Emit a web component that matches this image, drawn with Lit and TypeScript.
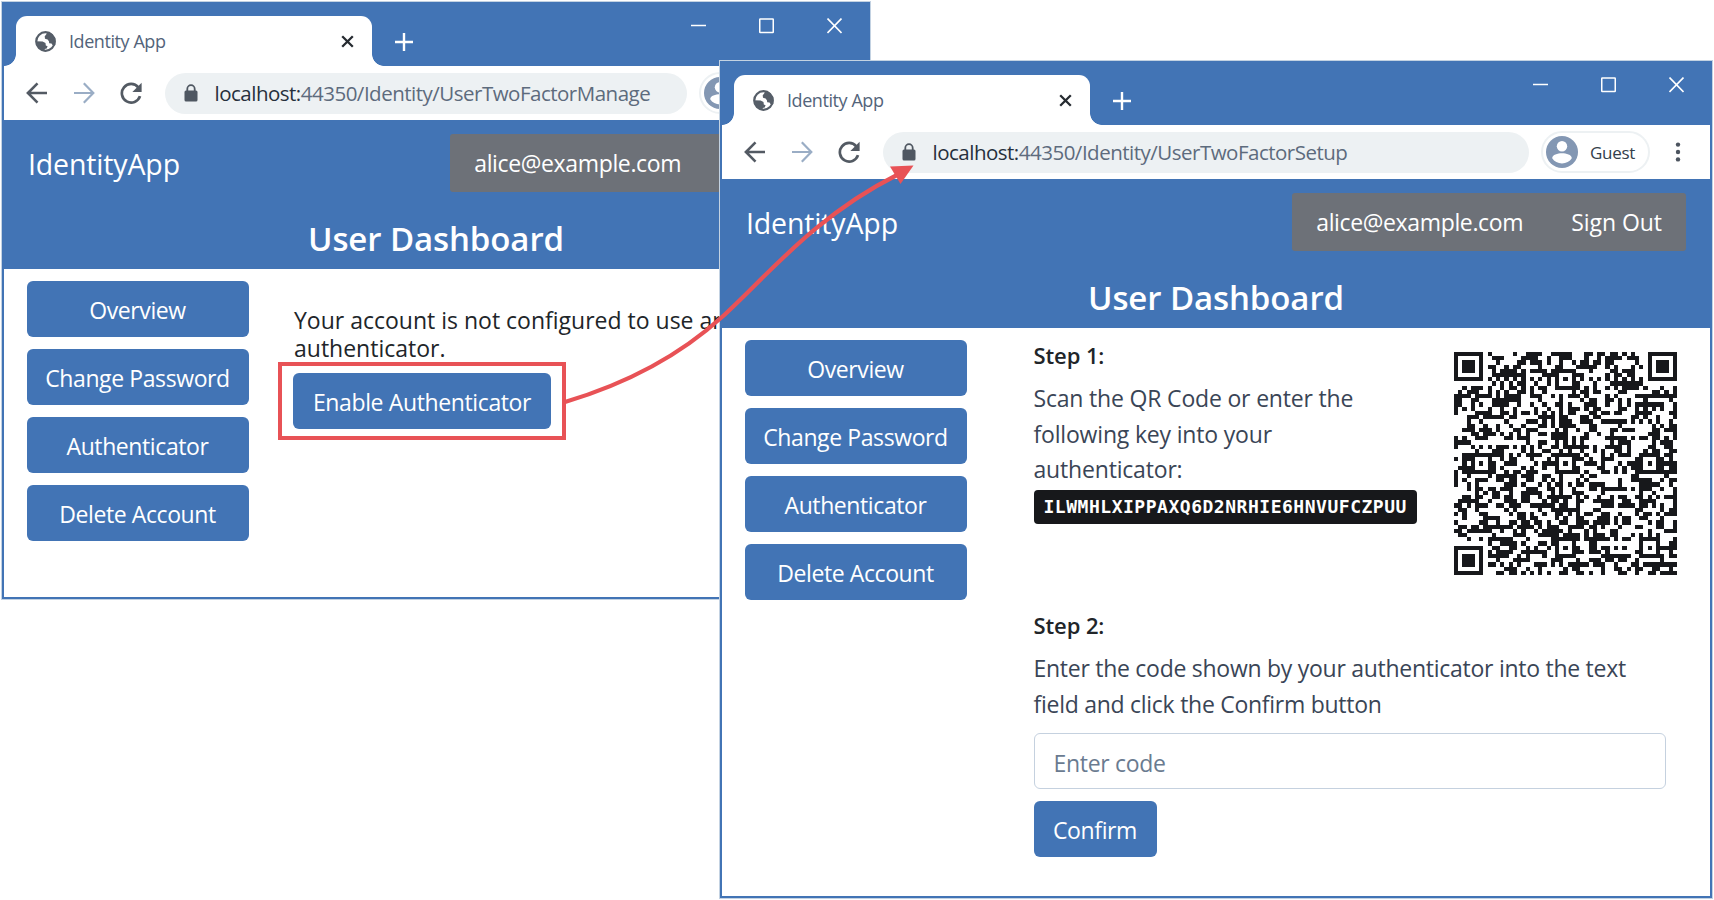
import { LitElement, html, css } from "lit";
import { customElement, property } from "lit/decorators.js";

/* ---------- QR code, version 9, error correction level H ---------- */
const SIZE = 53;
const CODEWORDS = 292;
const ECC_LEN = 24;
const BLOCKS = 8;
const FORMAT_H = 2;

function gfMul(x: number, y: number): number {
  let z = 0;
  for (let i = 7; i >= 0; i--) {
    z = (z << 1) ^ ((z >>> 7) * 0x11d);
    z ^= ((y >>> i) & 1) * x;
  }
  return z;
}

function divisor(degree: number): number[] {
  const r: number[] = new Array(degree).fill(0);
  r[degree - 1] = 1;
  let root = 1;
  for (let i = 0; i < degree; i++) {
    for (let j = 0; j < degree; j++) {
      r[j] = gfMul(r[j], root);
      if (j + 1 < degree) r[j] ^= r[j + 1];
    }
    root = gfMul(root, 2);
  }
  return r;
}

function remainder(data: number[], div: number[]): number[] {
  const r = div.map(() => 0);
  for (const b of data) {
    const f = b ^ (r.shift() as number);
    r.push(0);
    div.forEach((c, i) => (r[i] ^= gfMul(c, f)));
  }
  return r;
}

function encode(text: string): number[] {
  const cap = CODEWORDS - ECC_LEN * BLOCKS;
  const bits: number[] = [];
  const put = (v: number, n: number) => {
    for (let i = n - 1; i >= 0; i--) bits.push((v >>> i) & 1);
  };
  put(4, 4);
  put(text.length, 8);
  for (const c of text) put(c.charCodeAt(0), 8);
  put(0, Math.min(4, cap * 8 - bits.length));
  while (bits.length % 8) bits.push(0);
  const data: number[] = [];
  for (let i = 0; i < bits.length; i += 8) data.push(parseInt(bits.slice(i, i + 8).join(""), 2));
  for (let p = 0xec; data.length < cap; p ^= 0xec ^ 0x11) data.push(p);

  const shortCount = BLOCKS - (CODEWORDS % BLOCKS);
  const shortLen = Math.floor(CODEWORDS / BLOCKS);
  const div = divisor(ECC_LEN);
  const blocks: number[][] = [];
  for (let i = 0, k = 0; i < BLOCKS; i++) {
    const part = data.slice(k, k + shortLen - ECC_LEN + (i < shortCount ? 0 : 1));
    k += part.length;
    const ecc = remainder(part, div);
    if (i < shortCount) part.push(0);
    blocks.push(part.concat(ecc));
  }
  const out: number[] = [];
  for (let i = 0; i < blocks[0].length; i++)
    blocks.forEach((b, j) => {
      if (i !== shortLen - ECC_LEN || j >= shortCount) out.push(b[i]);
    });
  return out;
}

function qrPath(text: string): string {
  const words = encode(text);
  const grid = Array.from({ length: SIZE }, () => new Array<number>(SIZE).fill(0));
  const fixed = Array.from({ length: SIZE }, () => new Array<boolean>(SIZE).fill(false));
  const set = (x: number, y: number, v: unknown) => {
    if (x < 0 || y < 0 || x >= SIZE || y >= SIZE) return;
    grid[y][x] = v ? 1 : 0;
    fixed[y][x] = true;
  };
  for (let i = 0; i < SIZE; i++) {
    set(6, i, i % 2 === 0);
    set(i, 6, i % 2 === 0);
  }
  for (const [a, b] of [[3, 3], [SIZE - 4, 3], [3, SIZE - 4]])
    for (let y = -4; y <= 4; y++)
      for (let x = -4; x <= 4; x++) {
        const d = Math.max(Math.abs(x), Math.abs(y));
        set(a + x, b + y, d !== 2 && d !== 4);
      }
  const align = [6, 26, 46];
  align.forEach((a, i) =>
    align.forEach((b, j) => {
      if ((i === 0 && j === 0) || (i === 0 && j === 2) || (i === 2 && j === 0)) return;
      for (let y = -2; y <= 2; y++)
        for (let x = -2; x <= 2; x++) set(a + x, b + y, Math.max(Math.abs(x), Math.abs(y)) !== 1);
    })
  );
  const fmt = FORMAT_H << 3;
  let r = fmt;
  for (let i = 0; i < 10; i++) r = (r << 1) ^ ((r >>> 9) * 0x537);
  const fb = ((fmt << 10) | r) ^ 0x5412;
  const bit = (i: number) => (fb >>> i) & 1;
  for (let i = 0; i <= 5; i++) set(8, i, bit(i));
  set(8, 7, bit(6));
  set(8, 8, bit(7));
  set(7, 8, bit(8));
  for (let i = 9; i < 15; i++) set(14 - i, 8, bit(i));
  for (let i = 0; i < 8; i++) set(SIZE - 1 - i, 8, bit(i));
  for (let i = 8; i < 15; i++) set(8, SIZE - 15 + i, bit(i));
  set(8, SIZE - 8, 1);
  let v = 9;
  for (let i = 0; i < 12; i++) v = (v << 1) ^ ((v >>> 11) * 0x1f25);
  v = (9 << 12) | v;
  for (let i = 0; i < 18; i++) {
    const a = SIZE - 11 + (i % 3);
    const c = Math.floor(i / 3);
    set(a, c, (v >>> i) & 1);
    set(c, a, (v >>> i) & 1);
  }
  let k = 0;
  for (let right = SIZE - 1; right >= 1; right -= 2) {
    if (right === 6) right = 5;
    for (let w = 0; w < SIZE; w++)
      for (let j = 0; j < 2; j++) {
        const x = right - j;
        const y = ((right + 1) & 2) === 0 ? SIZE - 1 - w : w;
        if (!fixed[y][x] && k < words.length * 8) {
          grid[y][x] = (words[k >>> 3] >>> (7 - (k & 7))) & 1;
          k++;
        }
      }
  }
  let d = "";
  for (let y = 0; y < SIZE; y++)
    for (let x = 0; x < SIZE; x++) {
      const flip = !fixed[y][x] && (x + y) % 2 === 0 ? 1 : 0;
      if (grid[y][x] ^ flip) d += `M${x} ${y}h1v1h-1z`;
    }
  return d;
}

const KEY = "ILWMHLXIPPAXQ6D2NRHIE6HNVUFCZPUU";

@customElement("qr-code")
export class QrCode extends LitElement {
  @property() value = "";
  static styles = css`
    :host { display: block; width: 223px; height: 223px; }
    svg { display: block; width: 100%; height: 100%; }
  `;
  render() {
    return html`<svg viewBox="0 0 53 53" preserveAspectRatio="none" shape-rendering="crispEdges">
      <path fill="#17181b" d=${qrPath(this.value)} />
    </svg>`;
  }
}

/* ---------- Browser window with the dashboard page ---------- */
@customElement("browser-window")
export class BrowserWindow extends LitElement {
  @property() path = "";
  @property() user = "";

  static styles = css`
    :host {
      display: flex;
      flex-direction: column;
      box-sizing: border-box;
      border: 2px solid #4274b5;
      background: #fff;
      overflow: hidden;
      box-shadow: 0 0 0 1px #c3d2e2;
    }
    svg { display: block; flex: none; }
    .strip {
      flex: none;
      display: flex;
      align-items: flex-start;
      height: 62px;
      background: #4274b5;
      color: #fff;
    }
    .tab {
      position: relative;
      display: flex;
      align-items: center;
      box-sizing: border-box;
      width: 356px;
      height: 50px;
      margin: 12px 0 0 12px;
      padding: 0 18px 0 19px;
      border-radius: 11px 11px 0 0;
      background: #fff;
      color: #53647a;
    }
    .tab::before, .tab::after {
      content: "";
      position: absolute;
      bottom: 0;
      width: 12px;
      height: 12px;
    }
    .tab::before { left: -12px; background: radial-gradient(circle at 0 0, #4274b5 11.5px, #fff 12.2px); }
    .tab::after { right: -12px; background: radial-gradient(circle at 100% 0, #4274b5 11.5px, #fff 12.2px); }
    .tab-title { flex: 1; margin-left: 13px; font-size: 18px; letter-spacing: -0.43px; }
    .plus { margin: 29px 0 0 23px; }
    .controls { display: flex; gap: 53px; margin: 14px 26.5px 0 auto; }
    .toolbar {
      flex: none;
      display: flex;
      align-items: center;
      height: 54px;
      box-sizing: border-box;
      padding: 0 29px 0 22px;
      color: #5f6670;
    }
    .nav-icons { display: flex; gap: 25px; }
    .address {
      flex: 1;
      display: flex;
      align-items: center;
      height: 41px;
      box-sizing: border-box;
      margin: 0 12px 0 21px;
      padding-left: 19px;
      border-radius: 21px;
      background: #edf1f3;
      font-size: 20.5px;
      letter-spacing: -0.5px;
      color: #5d6b7d;
      white-space: nowrap;
    }
    .address b { font-weight: 400; color: #26303c; }
    .url { margin-left: 16.5px; }
    .guest {
      display: flex;
      align-items: center;
      box-sizing: border-box;
      width: 109px;
      height: 42px;
      padding-left: 3px;
      border: 2px solid #edf1f3;
      border-radius: 21px;
      font-size: 17px;
      letter-spacing: -0.3px;
      color: #333e4b;
    }
    .guest span { margin-left: 12px; }
    .dots { margin-left: 25px; }
    header {
      flex: none;
      height: 149px;
      box-sizing: border-box;
      padding: 14px 24px 0 24px;
      background: #4274b5;
      color: #fff;
    }
    .bar { display: flex; align-items: center; justify-content: space-between; height: 58px; }
    .brand { padding-top: 1px; font-size: 28.5px; letter-spacing: -0.15px; }
    .account {
      display: flex;
      align-items: center;
      gap: 48px;
      height: 58px;
      padding: 0 24px;
      border-radius: 3px;
      background: #6d7178;
      font-size: 23px;
      letter-spacing: -0.35px;
    }
    .account span:last-child { letter-spacing: -0.05px; }
    h1 {
      margin: 25px 0 0;
      font-size: 33px;
      line-height: 44px;
      font-weight: 600;
      letter-spacing: -0.1px;
      text-align: center;
    }
    .body { flex: 1; display: flex; }
    aside {
      display: flex;
      flex-direction: column;
      gap: 12px;
      width: 222px;
      padding: 12px 0 0 22.5px;
    }
    .btn {
      display: flex;
      align-items: center;
      justify-content: center;
      box-sizing: border-box;
      height: 56px;
      padding: 2px 0 0 0;
      border-radius: 6px;
      background: #4274b5;
      color: #fff;
      font-size: 23px;
      letter-spacing: -0.4px;
      white-space: nowrap;
    }
    main { flex: 1; }
  `;

  render() {
    return html`
      <div class="strip">
        <div class="tab">
          <svg width="21" height="21" viewBox="0 0 21 21">
            <circle cx="10.500" cy="10.500" r="9.300" fill="#fff" stroke="#565e68" stroke-width="2.200" />
            <path fill="#565e68" d="M12.300 1.200L11 3.800l-1.300 1.400.3 2.600 2.600.7 1.300 1.700.3 2 2.300.2 1.500 2.300 2.300-.6V7.500L16.500 2.500zM1 10.300l6.600.2 2.900 1.600.3 2.300 1.800.9-.9 2.100-2 .7-.4 2.300L3.500 17z" />
          </svg>
          <span class="tab-title">Identity App</span>
          <svg width="13" height="13" viewBox="0 0 13 13"><path d="M1.200 1.200l10.600 10.600M11.800 1.200L1.200 11.800" stroke="#262b31" stroke-width="2.300" /></svg>
        </div>
        <svg class="plus" width="18" height="18" viewBox="0 0 18 18"><path d="M9 0v18M0 9h18" stroke="#fff" stroke-width="2.400" /></svg>
        <div class="controls">
          <svg width="15" height="16" viewBox="0 0 15 16"><path d="M0 7.500h15" stroke="#fff" stroke-width="1.500" /></svg>
          <svg width="15" height="16" viewBox="0 0 15 16"><rect x=".75" y="1" width="13.500" height="13.500" rx=".5" fill="none" stroke="#fff" stroke-width="1.500" /></svg>
          <svg width="15" height="16" viewBox="0 0 15 16"><path d="M.5.500l14 14.500M14.500.500L.5 15" stroke="#fff" stroke-width="1.600" /></svg>
        </div>
      </div>
      <div class="toolbar">
        <div class="nav-icons">
          <svg width="22" height="22" viewBox="0 0 22 22" fill="none" stroke="#535a63" stroke-width="2.600"><path d="M21 11H2M11.500 1.300L1.900 11l9.600 9.700" /></svg>
          <svg width="22" height="22" viewBox="0 0 22 22" fill="none" stroke="#9aadc5" stroke-width="2.200"><path d="M1 11h19M10.800 1.300L20.300 11l-9.500 9.700" /></svg>
          <svg width="24" height="22" viewBox="0 0 24 22"><path d="M18.300 5.300A9.300 9.300 0 1 0 20 14.200" fill="none" stroke="#535a63" stroke-width="2.700" /><path d="M21.600.8v9.200h-9.200z" fill="#535a63" /></svg>
        </div>
        <div class="address">
          <svg width="14" height="18" viewBox="0 0 14 18"><rect x=".5" y="6.500" width="13" height="11" rx="1.500" fill="#4f5761" /><path d="M3.300 7V4.900a3.700 3.700 0 0 1 7.400 0V7" fill="none" stroke="#4f5761" stroke-width="1.800" /></svg>
          <span class="url"><b>localhost:</b>${this.path}</span>
        </div>
        <div class="guest">
          <svg width="32" height="32" viewBox="0 0 32 32"><circle cx="16" cy="16" r="16" fill="#8397b3" /><circle cx="16" cy="10.300" r="5.200" fill="#fff" /><path d="M6.200 22.200c0-3.600 5.500-5 9.800-5s9.800 1.400 9.800 5c-2 3.300-5.700 5.200-9.800 5.200s-7.800-1.900-9.800-5.200z" fill="#fff" /></svg>
          <span>${this.user}</span>
        </div>
        <svg class="dots" width="6" height="20" viewBox="0 0 6 20" fill="#4c545f"><circle cx="3" cy="2.600" r="2.200" /><circle cx="3" cy="10" r="2.200" /><circle cx="3" cy="17.400" r="2.200" /></svg>
      </div>
      <header>
        <div class="bar">
          <div class="brand">IdentityApp</div>
          <div class="account"><span>alice@example.com</span><span>Sign Out</span></div>
        </div>
        <h1>User Dashboard</h1>
      </header>
      <div class="body">
        <aside>
          ${["Overview", "Change Password", "Authenticator", "Delete Account"].map((t) => html`<div class="btn">${t}</div>`)}
        </aside>
        <main><slot></slot></main>
      </div>
    `;
  }
}

@customElement("app-root")
export class AppRoot extends LitElement {
  static styles = css`
    :host {
      display: block;
      position: relative;
      width: 1714px;
      height: 900px;
      overflow: hidden;
      background: #fff;
      font-family: "Open Sans", "Noto Sans", sans-serif;
      color: #212529;
    }
    .win { position: absolute; }
    .back { left: 2px; top: 2px; width: 868px; height: 597px; }
    .front { left: 720px; top: 61px; width: 992px; height: 837px; }
    .arrow { position: absolute; left: 0; top: 0; }
    .btn {
      display: inline-flex;
      align-items: center;
      justify-content: center;
      box-sizing: border-box;
      height: 56px;
      padding-top: 1px;
      border-radius: 6px;
      background: #4274b5;
      color: #fff;
      font-size: 23px;
      letter-spacing: -0.37px;
      white-space: nowrap;
    }
    p { margin: 0; }
    .notice { padding: 37px 0 0 45.5px; }
    .notice p { width: 440px; font-size: 23px; line-height: 28px; font-weight: 500; }
    .enable { width: 258px; }
    .marked {
      display: inline-flex;
      margin: 0 0 0 -16px;
      padding: 7px 11px 7px 11px;
      border: 4px solid #e85256;
    }
    .setup { padding: 13px 0 0 67px; }
    .step { font-size: 22px; line-height: 28px; font-weight: 600; letter-spacing: -0.1px; }
    .text { margin-top: 12px; font-size: 23px; line-height: 35.5px; letter-spacing: -0.27px; color: #3a4556; white-space: nowrap; }
    .short { letter-spacing: -0.18px; }
    .scan { display: flex; height: 270px; }
    .instructions { width: 420px; }
    .key {
      display: inline-block;
      box-sizing: border-box;
      width: 383px;
      height: 34px;
      margin-top: 2px;
      padding-left: 10px;
      border-radius: 4px;
      background: #17181b;
      color: #fff;
      font: bold 18px/34px "DejaVu Sans Mono", monospace;
      letter-spacing: 0.52px;
    }
    .qr { margin-top: 11px; }
    .field {
      display: flex;
      align-items: center;
      box-sizing: border-box;
      width: 632px;
      height: 56px;
      margin: 11px 0 12px;
      padding: 4px 0 0 19px;
      border: 1.500px solid #c5d1df;
      border-radius: 6px;
      color: #6a7b90;
      font-size: 23px;
      letter-spacing: -0.3px;
    }
    .confirm { width: 123px; }
  `;

  render() {
    return html`
      <browser-window class="win back" .path=${"44350/Identity/UserTwoFactorManage"}>
        <div class="notice">
          <p>Your account is not configured to use an authenticator.</p>
          <div class="marked"><div class="btn enable">Enable Authenticator</div></div>
        </div>
      </browser-window>
      <browser-window class="win front" .path=${"44350/Identity/UserTwoFactorSetup"} .user=${"Guest"}>
        <div class="setup">
          <div class="scan">
            <div class="instructions">
              <p class="step">Step 1:</p>
              <p class="text short">Scan the QR Code or enter the<br />following key into your<br />authenticator:</p>
              <div class="key">${KEY}</div>
            </div>
            <qr-code class="qr" .value=${`otpauth://totp/ExampleApp:alice@example.com?secret=${KEY}`}></qr-code>
          </div>
          <p class="step">Step 2:</p>
          <p class="text">Enter the code shown by your authenticator into the text<br />field and click the Confirm button</p>
          <div class="field">Enter code</div>
          <div class="btn confirm">Confirm</div>
        </div>
      </browser-window>
      <svg class="arrow" width="1714" height="900" viewBox="0 0 1714 900">
        <path d="M565 402C622 385 678 357 722 317C766 277 815 216 897 175" fill="none" stroke="#e85256" stroke-width="4.200" />
        <path d="M913.500 165.500L890 166.500L900.500 184z" fill="#e85256" />
      </svg>
    `;
  }
}
